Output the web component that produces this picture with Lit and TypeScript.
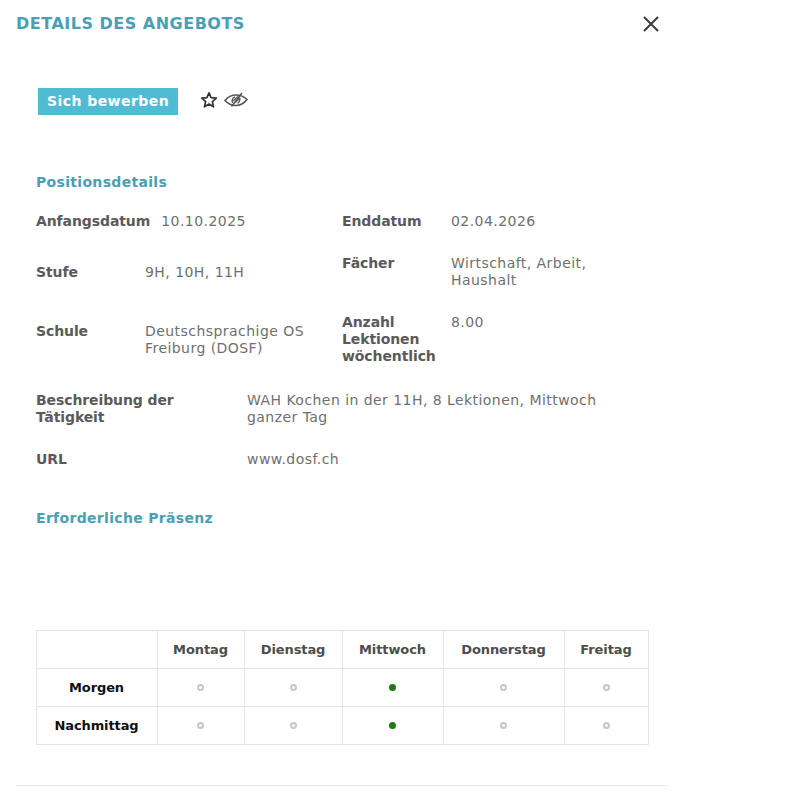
import { LitElement, html, css, svg } from "lit";
import { customElement } from "lit/decorators.js";

const days = ["Montag", "Dienstag", "Mittwoch", "Donnerstag", "Freitag"];
const rows = ["Morgen", "Nachmittag"];

@customElement("app-root")
export class AppRoot extends LitElement {
  static styles = css`
    :host {
      display: block;
      width: 668px;
      height: 800px;
      overflow: hidden;
      background: #fff;
      font-family: "DejaVu Sans", Verdana, sans-serif;
      font-size: 14px;
      line-height: 17px;
      color: #6f6f6f;
    }
    .head {
      height: 47px;
      padding: 0 0 1px 16px;
      box-sizing: content-box;
      display: flex;
      align-items: center;
      justify-content: space-between;
    }
    .head h1 {
      margin: 0;
      font-size: 16px;
      font-weight: 700;
      color: #4a9fb5;
      letter-spacing: 0.5px;
    }
    .close {
      width: 18px;
      height: 18px;
      margin-right: 8px;
      display: block;
    }
    .body {
      padding: 40px 20px 0 36px;
    }
    .actions {
      display: flex;
      align-items: center;
      gap: 22px;
      padding-left: 2px;
      height: 27px;
    }
    .apply {
      width: 140px;
      height: 27px;
      background: #4fbcd4;
      color: #fff;
      font-weight: 700;
      font-size: 14px;
      letter-spacing: 0.45px;
      display: flex;
      align-items: center;
      justify-content: center;
    }
    .icons {
      display: flex;
      align-items: center;
      gap: 6px;
      margin-top: -3px;
    }
    h2 {
      margin: 0;
      font-size: 14px;
      line-height: 17px;
      font-weight: 700;
      color: #4a9fb5;
      letter-spacing: 0.32px;
    }
    .pos { margin-top: 59px; }
    .grid {
      display: grid;
      grid-template-columns: 306px 1fr;
    }
    .pair { display: flex; }
    .label { font-weight: 700; color: #5a5a5a; letter-spacing: -0.1px; }
    .l1 { width: 109px; flex: none; }
    .l2 { width: 109px; flex: none; }
    .l3 { width: 211px; flex: none; }
    .val { color: #6f6f6f; letter-spacing: 0.45px; }
    .r1 { margin-top: 22px; }
    .r1 .gap { margin-left: 11px; }
    .r2 { margin-top: 25px; }
    .r3 { margin-top: 25px; }
    .wide { margin-top: 27px; }
    .wide2 { margin-top: 25px; }
    .pres { margin-top: 42px; }
    .stufe { padding-top: 9px; }
    .schule { padding-top: 9px; }
    table {
      margin-top: 103px;
      margin-left: -0.5px;
      border-collapse: collapse;
      table-layout: fixed;
      width: 613px;
      font-size: 13px;
    }
    th, td {
      border: 1px solid #e4e4e4;
      height: 38px;
      padding: 0;
      text-align: center;
      vertical-align: middle;
      box-sizing: border-box;
    }
    th { font-weight: 700; color: #4d4d4d; letter-spacing: -0.1px; }
    th.row { color: #111; }
    .dot {
      display: block;
      width: 7px;
      height: 7px;
      margin: 0 auto;
      box-sizing: border-box;
      border-radius: 50%;
      border: 2px solid #c6c6c6;
    }
    .dot.on { background: #1e7d12; border-color: #1e7d12; }
    hr {
      position: absolute;
      left: 16px;
      top: 785px;
      width: 652px;
      margin: 0;
      border: 0;
      border-top: 1px solid #e8e8e8;
    }
  `;

  render() {
    return html`
      <div class="head">
        <h1>DETAILS DES ANGEBOTS</h1>
        <svg class="close" viewBox="0 0 18 18" fill="none" stroke="#3a3a3a" stroke-width="2">
          ${svg`<path d="M2 2 L16 16 M16 2 L2 16" />`}
        </svg>
      </div>
      <div class="body">
        <div class="actions">
          <div class="apply">Sich bewerben</div>
          <div class="icons">
            <svg width="18" height="18" viewBox="0 0 18 18" fill="none" stroke="#333" stroke-width="1.7" stroke-linejoin="round">
              ${svg`<path d="M9 1.8 L11.1 6.6 L16.3 7.1 L12.4 10.6 L13.5 15.8 L9 13.1 L4.5 15.8 L5.6 10.6 L1.7 7.1 L6.9 6.6 Z" />`}
            </svg>
            <svg width="24" height="18" viewBox="0 0 24 18" fill="none" stroke="#555" stroke-width="1.6">
              ${svg`<path d="M1 9.5 C4.5 5 8 4 12 4 C16 4 19.5 5 23 8.5 C19.5 13 16 14.5 12 14.5 C8 14.5 4.5 13.5 1 9.5 Z" />
              <path d="M8.5 12 C7.5 9.5 8.5 6.5 11 6 M15.5 6.5 C16.5 8.5 15.5 11.5 13.5 12.3" stroke-width="1.4" />
              <path d="M9 10 L14 5.5 M10.5 12 L15.5 7.5" stroke-width="1.2" />
              <path d="M7.5 15.5 L18 2" stroke-width="1.5" />`}
            </svg>
          </div>
        </div>

        <h2 class="pos">Positionsdetails</h2>

        <div class="grid r1">
          <div class="pair"><span class="label">Anfangsdatum</span><span class="val gap">10.10.2025</span></div>
          <div class="pair"><span class="label l2">Enddatum</span><span class="val">02.04.2026</span></div>
        </div>
        <div class="grid r2">
          <div class="pair stufe"><span class="label l1">Stufe</span><span class="val">9H, 10H, 11H</span></div>
          <div class="pair"><span class="label l2">Fächer</span><span class="val">Wirtschaft, Arbeit,<br />Haushalt</span></div>
        </div>
        <div class="grid r3">
          <div class="pair schule"><span class="label l1">Schule</span><span class="val">Deutschsprachige OS<br />Freiburg (DOSF)</span></div>
          <div class="pair"><span class="label l2">Anzahl<br />Lektionen<br />wöchentlich</span><span class="val">8.00</span></div>
        </div>
        <div class="pair wide">
          <span class="label l3">Beschreibung der<br />Tätigkeit</span>
          <span class="val">WAH Kochen in der 11H, 8 Lektionen, Mittwoch<br />ganzer Tag</span>
        </div>
        <div class="pair wide2">
          <span class="label l3">URL</span><span class="val">www.dosf.ch</span>
        </div>

        <h2 class="pres">Erforderliche Präsenz</h2>

        <table>
          <colgroup>
            <col style="width:121px" /><col style="width:87px" /><col style="width:98px" />
            <col style="width:101px" /><col style="width:121px" /><col style="width:84px" />
          </colgroup>
          <tr>
            <th></th>
            ${days.map((d) => html`<th>${d}</th>`)}
          </tr>
          ${rows.map(
            (r) => html`<tr>
              <th class="row">${r}</th>
              ${days.map((d) => html`<td><span class="dot ${d === "Mittwoch" ? "on" : ""}"></span></td>`)}
            </tr>`
          )}
        </table>
      </div>
      <hr />
    `;
  }
}
